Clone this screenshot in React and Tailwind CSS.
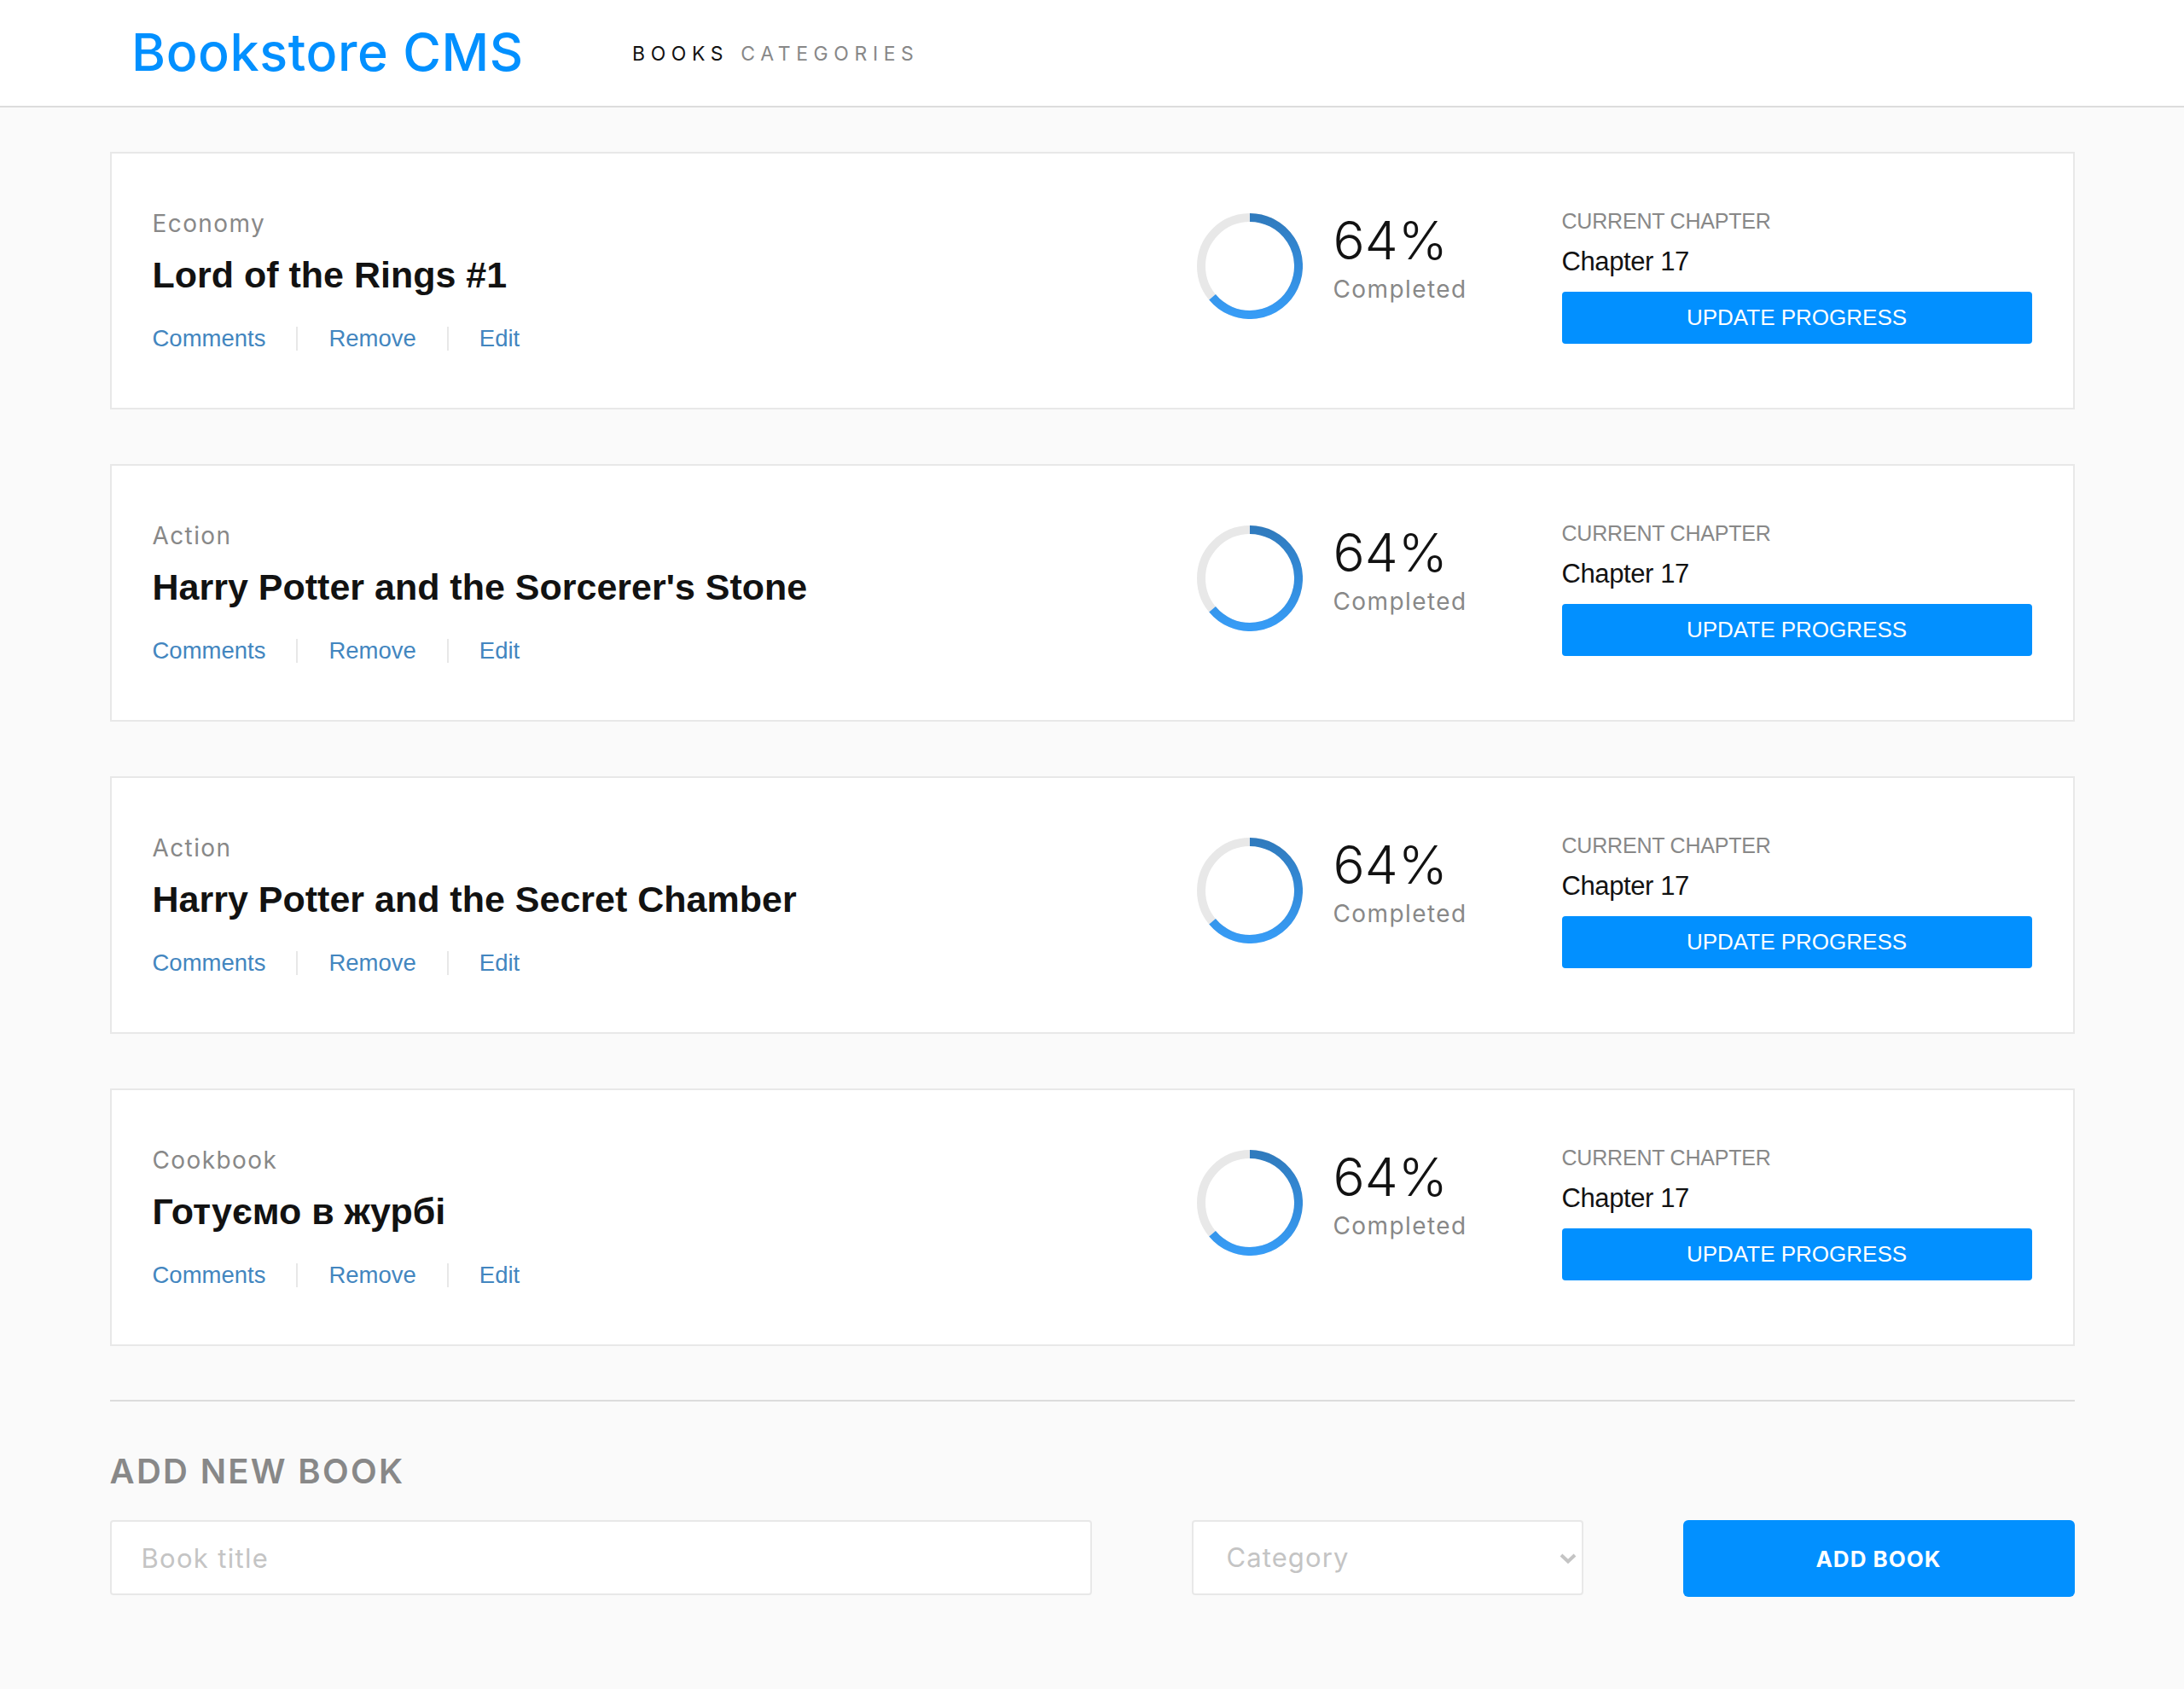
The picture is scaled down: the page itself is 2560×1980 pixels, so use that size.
const books = [
  { category: "Economy", title: "Lord of the Rings #1" },
  { category: "Action", title: "Harry Potter and the Sorcerer's Stone" },
  { category: "Action", title: "Harry Potter and the Secret Chamber" },
  { category: "Cookbook", title: "Готуємо в журбі" },
];

const mont = "font-['Inter','Open_Sans',sans-serif]";
const helv = "font-['Liberation_Sans',Arial,sans-serif]";

// 64% ring, arc starts at 12 o'clock and runs clockwise
function ProgressRing({ id }) {
  return (
    <svg width="124" height="124" viewBox="0 0 124 124" className="shrink-0 mt-[4px]">
      <defs>
        <linearGradient id={id} x1="0" y1="5" x2="0" y2="119" gradientUnits="userSpaceOnUse">
          <stop offset="0" stopColor="#307bbe" />
          <stop offset="1" stopColor="#379cf6" />
        </linearGradient>
      </defs>
      <circle cx="62" cy="62" r="57" fill="none" stroke="#e8e8e8" strokeWidth="10" />
      <path d="M62 5 A57 57 0 1 1 18.1 98.3" fill="none" stroke={`url(#${id})`} strokeWidth="10" />
    </svg>
  );
}

function BookCard({ book, index }) {
  return (
    <div className="h-[302px] bg-white border-2 border-[#e8e8e8] flex items-start pt-[64px] pl-[48px] pr-[48px]">
      <div className="flex-1 pt-[1px]">
        <div className={`${mont} text-[28px] leading-[34px] text-[#888] tracking-[1.4px]`}>{book.category}</div>
        <div className={`${helv} font-bold text-[43px] leading-[50px] text-[#121212] mt-[18px]`}>
          {book.title}
        </div>
        <div className={`${helv} text-[27.5px] leading-[34px] text-[#4386bf] mt-[33px] flex items-center`}>
          <span>Comments</span>
          <span className="w-[2px] h-[28px] bg-[#e8e8e8] mx-[36px]" />
          <span>Remove</span>
          <span className="w-[2px] h-[28px] bg-[#e8e8e8] mx-[36px]" />
          <span>Edit</span>
        </div>
      </div>

      <div className="w-[428px] flex items-start pt-[2px]">
        <ProgressRing id={`ring-${index}`} />
        <div className="ml-[36px]">
          <div className={`${mont} text-[62px] leading-[72px] text-[#121212] font-light`}>64%</div>
          <div className={`${mont} text-[28px] leading-[34px] text-[#888] mt-[4px] tracking-[1.4px]`}>Completed</div>
        </div>
      </div>

      <div className="w-[551px]">
        <div className={`${helv} text-[25px] leading-[30px] text-[#888] tracking-[-0.2px]`}>CURRENT CHAPTER</div>
        <div className={`${helv} text-[31px] leading-[36px] text-[#121212] mt-[15px] tracking-[-0.4px]`}>Chapter 17</div>
        <button className={`${helv} mt-[17px] w-full h-[61px] rounded-[4px] bg-[#0290ff] text-white text-[26px]`}>
          UPDATE PROGRESS
        </button>
      </div>
    </div>
  );
}

export default function App() {
  return (
    <div className="min-h-screen bg-[#fafafa]">
      <header className="h-[126px] bg-white border-b-2 border-[#dcdcdc] flex items-center pl-[154px]">
        <span className={`${mont} w-[587px] text-[61px] text-[#0290ff] font-medium tracking-[0.6px]`}>Bookstore CMS</span>
        <nav className={`${mont} flex items-center text-[23px] tracking-[6.6px] pt-[2px]`}>
          <span className="text-[#121212]">BOOKS</span>
          <span className="text-[#888] ml-[14px]">CATEGORIES</span>
        </nav>
      </header>

      <main className="max-w-[2303px] mx-auto pt-[52px]">
        <div className="flex flex-col gap-[64px]">
          {books.map((book, index) => (
            <BookCard key={index} book={book} index={index} />
          ))}
        </div>

        <div className="mt-[63px] h-[2px] bg-[#dcdcdc]" />

        <h2 className={`${mont} mt-[58px] text-[40px] leading-[48px] font-semibold text-[#888] tracking-[2.3px]`}>ADD NEW BOOK</h2>

        <form className="mt-[33px] grid grid-cols-[1151px_459px_459px] gap-x-[117px]">
          <input
            type="text"
            placeholder="Book title"
            className={`${mont} h-[88px] bg-white border-2 border-[#e8e8e8] rounded-[4px] px-[35px] text-[31px] tracking-[1.3px] text-[#121212] placeholder:text-[#c4c4c4] outline-none`}
          />
          <div className="relative">
            <select
              defaultValue=""
              className={`${mont} w-full h-[88px] bg-white border-2 border-[#e8e8e8] rounded-[4px] pl-[39px] text-[31px] tracking-[1.1px] text-[#c4c4c4] appearance-none outline-none`}
            >
              <option value="" disabled>
                Category
              </option>
              <option>Action</option>
              <option>Economy</option>
              <option>Cookbook</option>
            </select>
            <svg
              width="20"
              height="12"
              viewBox="0 0 20 12"
              className="absolute right-[8px] top-[39px] pointer-events-none"
            >
              <path d="M2 2 L10 9.5 L18 2" fill="none" stroke="#c4c4c4" strokeWidth="4" />
            </svg>
          </div>
          <button
            type="button"
            className={`${mont} h-[90px] rounded-[6px] bg-[#0290ff] text-white text-[26px] font-bold tracking-[1px]`}
          >
            ADD BOOK
          </button>
        </form>
      </main>
    </div>
  );
}
